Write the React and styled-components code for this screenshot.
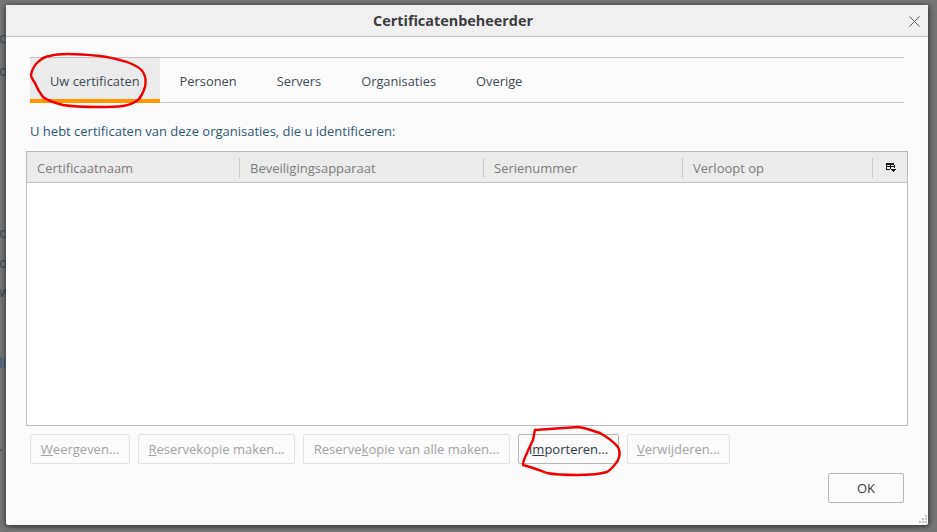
import styled, { createGlobalStyle } from "styled-components";

const GlobalStyle = createGlobalStyle`
  html, body {
    margin: 0;
    height: 100%;
    overflow: hidden;
  }
  body {
    background: #757575;
    font-family: "Open Sans", "Noto Sans", sans-serif;
    font-size: 13px;
  }
`;

const tabs = ["Uw certificaten", "Personen", "Servers", "Organisaties", "Overige"];

const columns = [
  { label: "Certificaatnaam", width: 213 },
  { label: "Beveiligingsapparaat", width: 244 },
  { label: "Serienummer", width: 199 },
  { label: "Verloopt op", width: 190 },
];

const actions = [
  { before: "", key: "W", after: "eergeven...", width: 100 },
  { before: "", key: "R", after: "eservekopie maken...", width: 157 },
  { before: "Reserve", key: "k", after: "opie van alle maken...", width: 207 },
  { before: "I", key: "m", after: "porteren...", width: 101, enabled: true },
  { before: "", key: "V", after: "erwijderen...", width: 103 },
];

const behind = [
  { text: "c", top: 28, color: "#3d4a55" },
  { text: "o", top: 61, color: "#3d4a55" },
  { text: "c", top: 223, color: "#3d4a55" },
  { text: "o", top: 253, color: "#3d4a55" },
  { text: "w", top: 282, color: "#3d4a55" },
  { text: "li", top: 353, color: "#2f5f86" },
  { text: ".", top: 436, color: "#3d4a55" },
];

export default function App() {
  return (
    <>
      <GlobalStyle />
      <Screen>
        {behind.map((b) => (
          <BehindText key={b.top} $top={b.top} $color={b.color}>
            {b.text}
          </BehindText>
        ))}
        <Dialog>
          <TitleBar>
            <Title>Certificatenbeheerder</Title>
            <CloseButton aria-label="Sluiten">
              <svg width="11" height="11" viewBox="0 0 11 11">
                <path d="M0.5 0.5L10.5 10.5M10.5 0.5L0.5 10.5" stroke="#5a5a5a" strokeWidth="1" fill="none" />
              </svg>
            </CloseButton>
          </TitleBar>
          <Content>
            <TabBar>
              {tabs.map((t, i) => (
                <Tab key={t} $active={i === 0}>
                  {t}
                </Tab>
              ))}
            </TabBar>
            <Intro>U hebt certificaten van deze organisaties, die u identificeren:</Intro>
            <Table>
              <HeaderRow>
                {columns.map((c) => (
                  <HeaderCell key={c.label} $width={c.width}>
                    {c.label}
                  </HeaderCell>
                ))}
                <PickerCell>
                  <svg width="11" height="10" viewBox="0 0 11 10" shapeRendering="crispEdges">
                    <path d="M1 0H9V2H1z" fill="#111" />
                    <path d="M1.5 2V7M9.5 2V5M5.5 2V6M1 3.5H10M1 6.5H5" stroke="#111" strokeWidth="1" fill="none" />
                    <path d="M6 6H11V7H10V8H9V9H8V8H7V7H6Z" fill="#111" />
                  </svg>
                </PickerCell>
              </HeaderRow>
              <TableBody />
            </Table>
            <ActionRow>
              {actions.map((a) => (
                <ActionButton key={a.key} $width={a.width} $enabled={a.enabled}>
                  {a.before}
                  <u>{a.key}</u>
                  {a.after}
                </ActionButton>
              ))}
            </ActionRow>
            <Footer>
              <OkButton>OK</OkButton>
            </Footer>
          </Content>
          <Grip>
            <svg width="10" height="10" viewBox="0 0 10 10" shapeRendering="crispEdges">
              <path d="M7 0h2v2H7zM4 3h2v2H4zM7 3h2v2H7zM1 6h2v2H1zM4 6h2v2H4zM7 6h2v2H7z" fill="#c4c4c4" />
            </svg>
          </Grip>
        </Dialog>
        <Scribble width="937" height="532" viewBox="0 0 937 532">
          <path d="M68 54C80 54 90 55 100 56C110 57 120 60 127 62C135 65 141 68 143 72C146 77 146 82 145 87C143 93 141 97 138 100C134 103 130 105 123 106C115 107 108 107 100 107C88 107 75 107 63 105C55 103 48 101 43 97C39 92 37 88 35 83C33 80 31 78 31 75C32 70 34 66 37 63C41 59 45 56 50 56C56 54 62 54 68 54Z" />
          <path d="M535 430C550 429 565 428 578 427C586 428 593 431 600 433C607 437 613 441 618 447C620 451 620 456 618 460C615 465 612 469 607 472C597 475 587 475 577 475C567 475 557 475 547 473C539 470 531 467 523 465C523 461 525 457 527 453C529 448 531 444 533 440C534 436 534 433 535 430Z" />
        </Scribble>
      </Screen>
    </>
  );
}

const Screen = styled.div`
  position: relative;
  width: 937px;
  height: 532px;
  overflow: hidden;
`;

const BehindText = styled.span`
  position: absolute;
  left: -1px;
  top: ${(p) => p.$top}px;
  font-size: 14px;
  color: ${(p) => p.$color};
`;

const Dialog = styled.div`
  position: absolute;
  left: 6px;
  top: 5px;
  width: 922px;
  height: 520px;
  box-sizing: border-box;
  display: flex;
  flex-direction: column;
  background: #fbfbfb;
  border-radius: 2px;
  box-shadow: -1px 1px 5px rgba(0, 0, 0, 0.45), 2px 1px 5px rgba(0, 0, 0, 0.35);
`;

const TitleBar = styled.div`
  position: relative;
  flex: none;
  height: 32px;
  box-sizing: border-box;
  display: flex;
  align-items: center;
  justify-content: center;
  padding-right: 28px;
  background: #f0f0f0;
  border-bottom: 1px solid #c1c1c1;
`;

const Title = styled.div`
  font-size: 14.4px;
  font-weight: 700;
  color: #3c3c3c;
`;

const CloseButton = styled.div`
  position: absolute;
  right: 8px;
  top: 11px;
  display: flex;
`;

const Content = styled.div`
  flex: 1;
  display: flex;
  flex-direction: column;
  padding: 20px 20px 0 20px;
  min-height: 0;
`;

const TabBar = styled.div`
  display: flex;
  height: 46px;
  box-sizing: border-box;
  margin: 0 4px;
  border-top: 1px solid #c1c1c1;
  border-bottom: 1px solid #c1c1c1;
`;

const Tab = styled.div`
  display: flex;
  align-items: center;
  height: 45px;
  box-sizing: border-box;
  padding: 1px 20px 0;
  font-size: 12.85px;
  color: #3f4a54;
  background: ${(p) => (p.$active ? "#ebebeb" : "transparent")};
  box-shadow: ${(p) => (p.$active ? "inset 0 -4px 0 #ff9500" : "none")};
`;

const Intro = styled.div`
  margin: 18px 4px 0;
  height: 20px;
  line-height: 20px;
  color: #2f5674;
`;

const Table = styled.div`
  margin-top: 10px;
  height: 275px;
  box-sizing: border-box;
  display: flex;
  flex-direction: column;
  border: 1px solid #bcbcbc;
  background: #fff;
`;

const HeaderRow = styled.div`
  flex: none;
  display: flex;
  height: 31px;
  box-sizing: border-box;
  padding-top: 1px;
  align-items: center;
  background: #ebebeb;
  border-bottom: 1px solid #c1c1c1;
`;

const HeaderCell = styled.div`
  flex: none;
  width: ${(p) => p.$width}px;
  height: 20px;
  line-height: 20px;
  box-sizing: border-box;
  padding-left: 10px;
  color: #7d7d7d;
  border-right: 1px solid #c8c8c8;
`;

const PickerCell = styled.div`
  flex: 1;
  display: flex;
  justify-content: center;
`;

const TableBody = styled.div`
  flex: 1;
`;

const ActionRow = styled.div`
  display: flex;
  gap: 8px;
  margin: 8px 4px 0;
`;

const ActionButton = styled.div`
  width: ${(p) => p.$width}px;
  height: 30px;
  box-sizing: border-box;
  flex: none;
  display: flex;
  align-items: center;
  justify-content: center;
  white-space: pre;
  border: 1px solid ${(p) => (p.$enabled ? "#b5b5b5" : "#e2e2e2")};
  border-radius: 2px;
  color: ${(p) => (p.$enabled ? "#2e3a44" : "#a3a3a3")};
`;

const Footer = styled.div`
  display: flex;
  justify-content: flex-end;
  margin: 9px 4px 0;
`;

const OkButton = styled.div`
  width: 76px;
  height: 30px;
  box-sizing: border-box;
  display: flex;
  align-items: center;
  justify-content: center;
  border: 1px solid #b5b5b5;
  border-radius: 2px;
  color: #2e3a44;
`;

const Grip = styled.div`
  position: absolute;
  right: 0;
  bottom: 0;
  display: flex;
`;

const Scribble = styled.svg`
  position: absolute;
  left: 0;
  top: 0;
  pointer-events: none;
  path {
    fill: none;
    stroke: #f00000;
    stroke-width: 2.4;
    stroke-linejoin: round;
  }
`;
